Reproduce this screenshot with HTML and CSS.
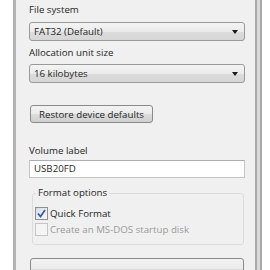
FILE: index.html
```html
<!DOCTYPE html>
<html lang="en">
<head>
    <meta charset="UTF-8">
    <title>Format USB20FD</title>
    <link rel="stylesheet" href="styles.css">
</head>
<body>
    <div class="window">
        <div class="panel">
            <p class="label">File system</p>
            <div class="combo">
                <span>FAT32 (Default)</span>
                <span class="arrow"></span>
            </div>

            <p class="label second">Allocation unit size</p>
            <div class="combo">
                <span>16 kilobytes</span>
                <span class="arrow"></span>
            </div>

            <button class="btn restore">Restore device defaults</button>

            <p class="label volume">Volume label</p>
            <div class="textbox">USB20FD</div>

            <fieldset class="group">
                <legend>Format options</legend>
                <div class="check checked">
                    <span class="box">
                        <svg width="9" height="9" viewBox="0 0 9 9">
                            <path d="M1 4.5 L3.5 7.5 L8 1" fill="none" stroke="#3d5aa0" stroke-width="1.7"/>
                        </svg>
                    </span>
                    <span>Quick Format</span>
                </div>
                <div class="check disabled">
                    <span class="box"></span>
                    <span>Create an MS-DOS startup disk</span>
                </div>
            </fieldset>

            <!-- only the top edge of the Start button is in view -->
            <button class="btn start" aria-label="Start"></button>
        </div>
    </div>
</body>
</html>
```

FILE: styles.css
```css
body {
    margin: 0;
    padding: 0;
    background-color: #ffffff;
    font-family: "Open Sans", "Noto Sans", sans-serif;
    font-size: 9.7px;
    color: #1e1e1e;
    overflow: hidden;
}
.window {
    margin-left: 13px;
    width: 239px;
    height: 270px;
    overflow: hidden;
    border-left: 3px solid #b4b4b4;
    border-right: 2px solid #a8a8a8;
    box-shadow: 3px 0 0 #d8d8d8, 5px 0 0 #a8a8a8;
    background-color: #f0f0f0;
}
.panel {
    padding: 3px 10px 0 13px;
}
.label {
    margin: 0 0 5px 0;
    line-height: 14px;
}
.label.second {
    margin-bottom: 4px;
}
.combo {
    display: flex;
    justify-content: space-between;
    align-items: center;
    height: 17px;
    padding: 0 6px 0 4px;
    border: 1px solid #9a9a9a;
    border-radius: 3px;
    background: linear-gradient(#f4f4f4, #ebebeb 50%, #dcdcdc 51%, #d6d6d6);
    margin-bottom: 5px;
}
.arrow {
    width: 0;
    height: 0;
    border-left: 3px solid transparent;
    border-right: 3px solid transparent;
    border-top: 4px solid #1a1a1a;
}
.btn {
    display: block;
    font-family: inherit;
    font-size: 9.7px;
    color: #1e1e1e;
    height: 18px;
    padding: 0 5px;
    white-space: nowrap;
    border: 1px solid #8a8a8a;
    border-radius: 3px;
    background: linear-gradient(#f2f2f2, #ebebeb 50%, #dddddd 51%, #cfcfcf);
}
.restore {
    margin: 22px 0 0 1px;
    width: 123px;
}
.volume {
    margin: 21px 0 2px 0;
}
.textbox {
    height: 16px;
    line-height: 16px;
    padding: 0 4px;
    border: 1px solid #c5c5c5;
    border-top-color: #abadb3;
    background-color: #ffffff;
}
.group {
    margin: 9px 1px 0 3px;
    padding: 6px 0 7px 2px;
    border: 1px solid #dcdcdc;
    border-radius: 3px;
}
.group legend {
    padding: 0 2px;
    margin-left: 1px;
    line-height: 12px;
}
.check {
    display: flex;
    align-items: center;
    gap: 2px;
    height: 16px;
}
.box {
    display: flex;
    align-items: center;
    justify-content: center;
    width: 11px;
    height: 11px;
    border: 1px solid #8f8f8f;
    background: linear-gradient(135deg, #dcdcdc, #ffffff);
}
.checked .box {
    background: linear-gradient(135deg, #d9dde6, #f6f7fa);
}
.disabled {
    color: #9a9a9a;
}
.disabled .box {
    border-color: #c4c4c4;
    background: #f4f4f4;
}
.start {
    width: 214px;
    height: 22px;
    margin: 13px 0 0 1px;
}
```
